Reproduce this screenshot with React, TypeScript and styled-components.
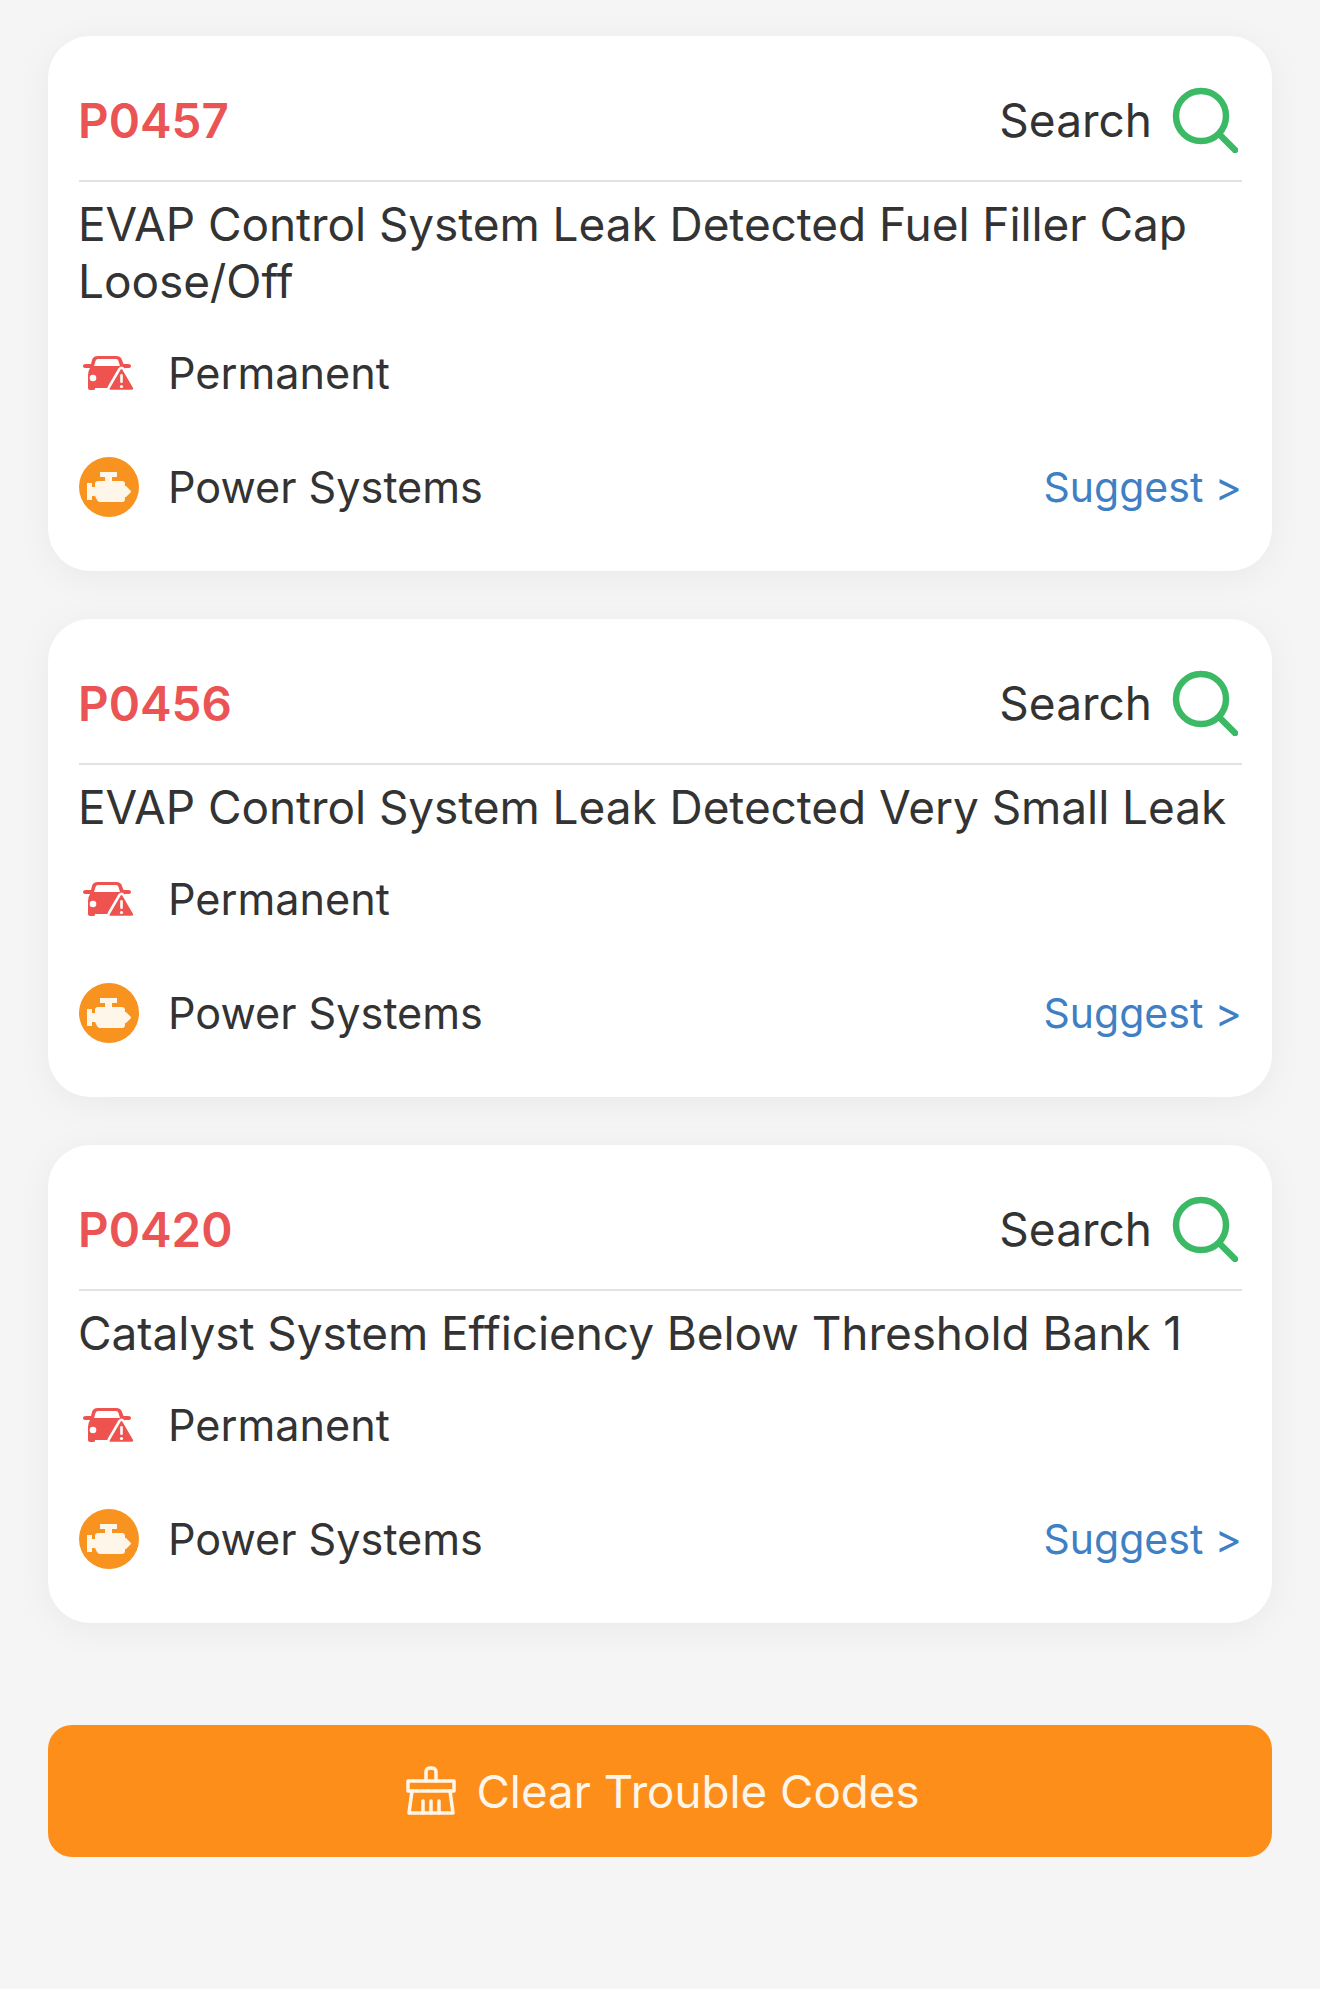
import React from 'react';
import styled, { createGlobalStyle } from 'styled-components';

const GlobalStyle = createGlobalStyle`
  html, body {
    margin: 0;
    padding: 0;
    background: #f5f5f5;
  }
  * {
    box-sizing: border-box;
  }
`;

const Page = styled.div`
  width: 1320px;
  height: 1989px;
  padding: 36px 48px 0;
  background: #f5f5f5;
  font-family: Inter, "Liberation Sans", sans-serif;
  color: #333333;
  overflow: hidden;
`;

const CardList = styled.div`
  display: flex;
  flex-direction: column;
  gap: 48px;
`;

const Card = styled.section`
  background: #ffffff;
  border-radius: 42px;
  padding: 0 30px 27px 31px;
  box-shadow: 0 6px 36px rgba(0, 0, 0, 0.05);
`;

const CardHeader = styled.div`
  height: 146px;
  padding-top: 24px;
  display: flex;
  align-items: center;
  justify-content: space-between;
  border-bottom: 2px solid #e2e2e2;
`;

const Code = styled.span`
  margin-left: -1px;
  font-size: 47.500px;
  font-weight: 600;
  color: #ea5455;
`;

const SearchLink = styled.span`
  display: flex;
  align-items: center;
  gap: 20px;
  padding-right: 4px;
  font-size: 46px;
`;

const Description = styled.p`
  margin: 14px 0 6px -1px;
  font-size: 46px;
  line-height: 57px;
  letter-spacing: -0.08px;
`;

const InfoRow = styled.div`
  height: 114px;
  display: flex;
  align-items: center;
  gap: 29px;
  font-size: 43.200px;
`;

const IconSlot = styled.span`
  width: 60px;
  display: flex;
  justify-content: center;
  flex-shrink: 0;
`;

const EngineBadge = styled.span`
  width: 60px;
  height: 60px;
  border-radius: 50%;
  background: #f7931e;
  display: flex;
  align-items: center;
  justify-content: center;
`;

const SuggestLink = styled.span`
  margin-left: auto;
  font-size: 41px;
  color: #3f7fc4;
`;

const ClearButton = styled.button`
  width: 100%;
  height: 132px;
  margin-top: 102px;
  padding: 0 0 0 5px;
  border: none;
  border-radius: 24px;
  background: #fe8e1a;
  color: #fff6ea;
  font-family: inherit;
  font-size: 45.700px;
  display: flex;
  align-items: center;
  justify-content: center;
  gap: 21px;
`;

const SearchIcon = () => (
  <svg width="66" height="66" viewBox="0 0 66 66" fill="none" stroke="#3cb965" strokeWidth="6.5" strokeLinecap="round">
    <circle cx="29" cy="29" r="25" />
    <path d="M48 48 L63 63" />
  </svg>
);

const CarWarningIcon = () => (
  <svg width="52" height="37" viewBox="0 0 52 37">
    <path
      fill="#ef5350"
      d="M9 5 Q10 1 15 1 H33 Q38 1 39 5 L40.500 9 H45 Q48 9 48 11 Q48 13 45 13 H42 L30 33 H12 V34 Q12 35 10 35 H7 Q5 35 5 33 V20 Q5 16 7 13 H3 Q0 13 0 11 Q0 9 3 9 H8 Z"
    />
    <path fill="#ffffff" d="M15 4 H33 Q35 4 35.500 6 L37 11 H11 L12.500 6 Q13 4 15 4 Z" />
    <circle cx="10" cy="23" r="3.300" fill="#ffffff" />
    <path
      fill="#ef5350"
      stroke="#ffffff"
      strokeWidth="2.500"
      strokeLinejoin="round"
      d="M36.500 14 Q38.500 11.500 40.500 14 L51 32 Q52.500 36 48.500 36 H28 Q24 36 26 32 Z"
    />
    <rect x="37.200" y="19" width="2.600" height="9" rx="1.300" fill="#ffffff" />
    <circle cx="38.500" cy="31.500" r="1.600" fill="#ffffff" />
  </svg>
);

const EngineIcon = () => (
  <svg width="44" height="30" viewBox="0 0 44 30">
    <path
      fill="#fff6ea"
      d="M13 0 H30 V5 H25 V9 H35 Q38 9 38 12 V14 H39 L44 19 V20 L39 25 H38 V27 Q38 30 35 30 H13 Q11 30 10 28 L8 24 H5 V28 H0 V11 H5 V15 H8 V12 Q8 9 11 9 H18 V5 H13 Z"
    />
  </svg>
);

const BroomIcon = () => (
  <svg width="50" height="50" viewBox="0 0 50 50" fill="none" stroke="#fff6ea" strokeWidth="3.500" strokeLinejoin="round" strokeLinecap="round">
    <path d="M20 15 V6 Q20 2 25 2 Q30 2 30 6 V15" />
    <path d="M2 15 H48 V25 H2 Z" />
    <path d="M6 25 L3 47 H47 L44 25" />
    <path d="M17 47 V35 M25 47 V35 M33 47 V35" />
  </svg>
);

const codes = [
  { code: 'P0457', text: 'EVAP Control System Leak Detected Fuel Filler Cap Loose/Off' },
  { code: 'P0456', text: 'EVAP Control System Leak Detected Very Small Leak' },
  { code: 'P0420', text: 'Catalyst System Efficiency Below Threshold Bank 1' },
];

const App: React.FC = () => {
  return (
    <Page>
      <GlobalStyle />
      <CardList>
        {codes.map(item => (
          <Card key={item.code}>
            <CardHeader>
              <Code>{item.code}</Code>
              <SearchLink>
                Search
                <SearchIcon />
              </SearchLink>
            </CardHeader>
            <Description>{item.text}</Description>
            <InfoRow>
              <IconSlot>
                <CarWarningIcon />
              </IconSlot>
              Permanent
            </InfoRow>
            <InfoRow>
              <IconSlot>
                <EngineBadge>
                  <EngineIcon />
                </EngineBadge>
              </IconSlot>
              Power Systems
              <SuggestLink>Suggest &gt;</SuggestLink>
            </InfoRow>
          </Card>
        ))}
      </CardList>
      <ClearButton>
        <BroomIcon />
        Clear Trouble Codes
      </ClearButton>
    </Page>
  );
};

export default App;
